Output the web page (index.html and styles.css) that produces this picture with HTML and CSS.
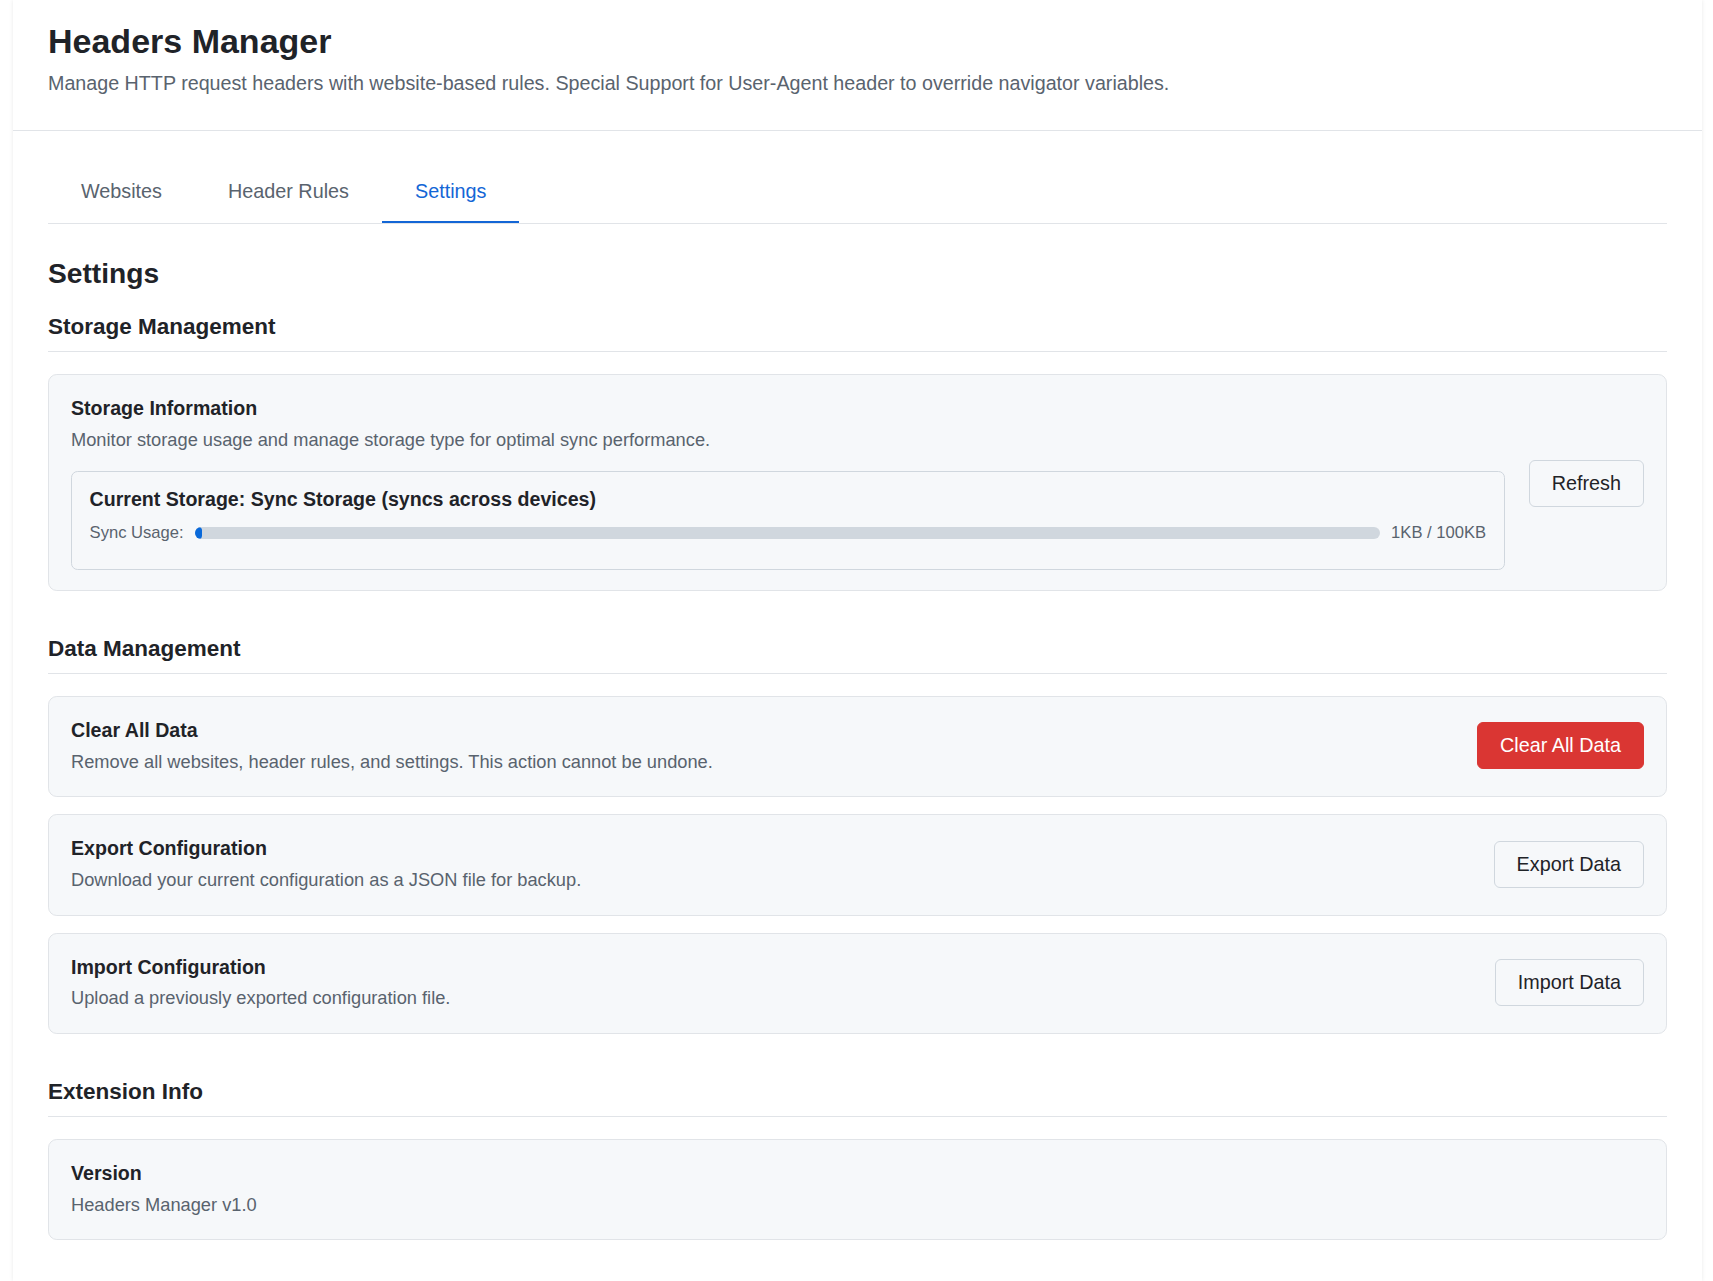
FILE: index.html
```html
<!DOCTYPE html>
<html lang="en">
<head>
<meta charset="utf-8">
<title>Headers Manager</title>
<link rel="stylesheet" href="styles.css">
</head>
<body>
<div class="app">
  <header class="app-header">
    <h1 class="app-title">Headers Manager</h1>
    <p class="app-subtitle">Manage HTTP request headers with website-based rules. Special Support for User-Agent header to override navigator variables.</p>
  </header>
  <main class="app-main">
    <nav class="tabs">
      <button class="tab">Websites</button>
      <button class="tab">Header Rules</button>
      <button class="tab tab-active">Settings</button>
    </nav>
    <section class="panel">
      <h2 class="panel-title">Settings</h2>

      <div class="group">
        <h3 class="group-title">Storage Management</h3>
        <div class="cards">
          <div class="card card-storage">
            <div class="card-body">
              <div class="card-title">Storage Information</div>
              <div class="card-desc">Monitor storage usage and manage storage type for optimal sync performance.</div>
              <div class="storage-box">
                <div class="storage-type">Current Storage: Sync Storage (syncs across devices)</div>
                <div class="usage-row">
                  <span class="usage-label">Sync Usage:</span>
                  <div class="usage-bar"><div class="usage-fill" style="width: 0.6%"></div></div>
                  <span class="usage-value">1KB / 100KB</span>
                </div>
              </div>
            </div>
            <button class="btn">Refresh</button>
          </div>
        </div>
      </div>

      <div class="group">
        <h3 class="group-title">Data Management</h3>
        <div class="cards">
          <div class="card">
            <div class="card-body">
              <div class="card-title">Clear All Data</div>
              <div class="card-desc">Remove all websites, header rules, and settings. This action cannot be undone.</div>
            </div>
            <button class="btn btn-danger">Clear All Data</button>
          </div>
          <div class="card">
            <div class="card-body">
              <div class="card-title">Export Configuration</div>
              <div class="card-desc">Download your current configuration as a JSON file for backup.</div>
            </div>
            <button class="btn">Export Data</button>
          </div>
          <div class="card">
            <div class="card-body">
              <div class="card-title">Import Configuration</div>
              <div class="card-desc">Upload a previously exported configuration file.</div>
            </div>
            <button class="btn">Import Data</button>
          </div>
        </div>
      </div>

      <div class="group">
        <h3 class="group-title">Extension Info</h3>
        <div class="cards">
          <div class="card">
            <div class="card-body">
              <div class="card-title">Version</div>
              <div class="card-desc">Headers Manager v1.0</div>
            </div>
          </div>
        </div>
      </div>
    </section>
  </main>
</div>
</body>
</html>
```

FILE: styles.css
```css
* {
  box-sizing: border-box;
}

html, body {
  margin: 0;
  padding: 0;
  background: #ffffff;
}

body {
  font-family: "Liberation Sans", Arial, Helvetica, sans-serif;
  color: #1f2328;
}

.app {
  width: 1689px;
  min-height: 1281px;
  margin: 0 11px 0 13px;
  background: #ffffff;
  box-shadow: 0 0 4px rgba(0, 0, 0, 0.09);
}

.app-header {
  padding: 22.2px 35px 35px;
  border-bottom: 1px solid #e1e4e8;
}

.app-title {
  margin: 0 0 11px;
  font-size: 34px;
  font-weight: 700;
  line-height: normal;
  color: #1f2328;
}

.app-subtitle {
  margin: 0;
  font-size: 19.7px;
  line-height: normal;
  color: #59636e;
}

.app-main {
  padding: 31px 35px 40px;
}

.tabs {
  display: flex;
  border-bottom: 1px solid #e1e4e8;
}

.tab {
  padding: 18px 33px 17.6px;
  margin: 0;
  border: none;
  border-bottom: 2px solid transparent;
  background: none;
  font-family: inherit;
  font-size: 19.8px;
  line-height: normal;
  color: #59636e;
  cursor: pointer;
}

.tab-active {
  color: #1366d6;
  border-bottom-color: #1366d6;
}

.panel-title {
  margin: 33.7px 0 0;
  font-size: 28.2px;
  font-weight: 700;
  line-height: normal;
  color: #1f2328;
}

.group {
  margin-top: 24px;
}

.group + .group {
  margin-top: 45px;
}

.group-title {
  margin: 0 0 22px;
  padding-bottom: 11px;
  border-bottom: 1px solid #e1e4e8;
  font-size: 22.5px;
  font-weight: 700;
  line-height: normal;
  color: #1f2328;
}

.cards {
  display: flex;
  flex-direction: column;
  gap: 17px;
}

.card {
  display: flex;
  align-items: center;
  gap: 24px;
  padding: 22px 22px 23.5px;
  background: #f6f8fa;
  border: 1px solid #e1e4e8;
  border-radius: 8.8px;
}

.card-storage {
  padding-bottom: 20.5px;
}

.card-body {
  flex: 1;
  min-width: 0;
}

.card-title {
  margin-bottom: 8.8px;
  font-size: 19.6px;
  font-weight: 700;
  line-height: normal;
  color: #1f2328;
}

.card-desc {
  font-size: 18.25px;
  line-height: normal;
  color: #59636e;
}

.storage-box {
  margin-top: 19.7px;
  padding: 15.8px 17.6px 25.8px;
  border: 1px solid #d0d7de;
  border-radius: 6.6px;
  background: #f6f8fa;
}

.storage-type {
  margin-bottom: 12px;
  font-size: 19.6px;
  font-weight: 700;
  line-height: normal;
  color: #1f2328;
}

.usage-row {
  display: flex;
  align-items: center;
  gap: 11.5px;
}

.usage-label,
.usage-value {
  font-size: 16.6px;
  line-height: normal;
  color: #59636e;
  white-space: nowrap;
}

.usage-bar {
  flex: 1;
  height: 12px;
  border-radius: 6px;
  background: #d0d7de;
  overflow: hidden;
}

.usage-fill {
  height: 100%;
  background: #0969da;
  border-radius: 6px;
}

.btn {
  flex: none;
  padding: 11px 22px;
  border: 1px solid #d0d7de;
  border-radius: 6px;
  background: #f6f8fa;
  font-family: inherit;
  font-size: 19.8px;
  line-height: normal;
  color: #1f2328;
  cursor: pointer;
}

.btn-danger {
  background: #da3633;
  border-color: #da3633;
  color: #ffffff;
}
```
